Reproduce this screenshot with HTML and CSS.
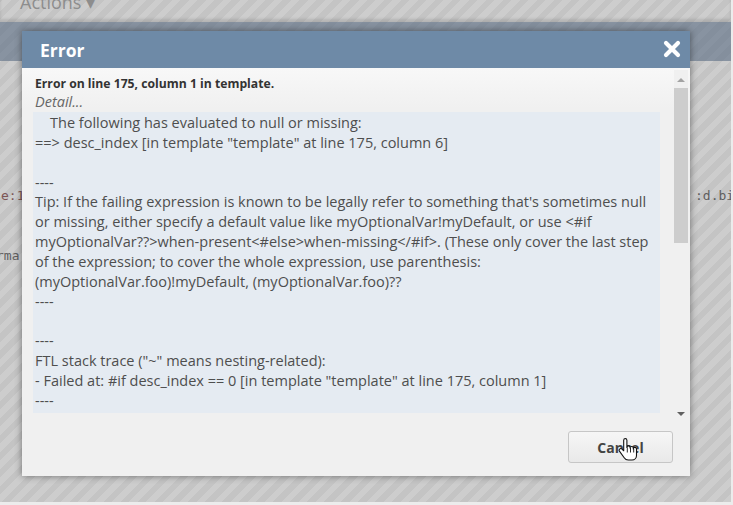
FILE: index.html
```html
<!DOCTYPE html>
<html>
<head>
<meta charset="utf-8">
<link rel="stylesheet" href="styles.css">
</head>
<body>
<div class="page">
  <div class="toolbar"><span class="actions">Actions ▾</span></div>
  <div class="band"></div>
  <div class="bg-code">
    <div class="bg-row row1"><span class="kw">e:1</span><span>:d.bil</span></div>
    <div class="bg-row row2"><span>rma</span></div>
  </div>

  <div class="dialog">
    <div class="dialog-title">
      <span class="title-text">Error</span>
      <svg class="close" width="18" height="18" viewBox="0 0 18 18"><path d="M3 3L15 15M15 3L3 15" stroke="#fff" stroke-width="4.2" stroke-linecap="round"/></svg>
    </div>
    <div class="dialog-body">
      <div class="scroll-content">
        <div class="err-head">Error on line 175, column 1 in template.</div>
        <div class="detail">Detail...</div>
<pre class="trace">    The following has evaluated to null or missing:
==&gt; desc_index [in template "template" at line 175, column 6]

----
Tip: If the failing expression is known to be legally refer to something that's sometimes null
or missing, either specify a default value like myOptionalVar!myDefault, or use &lt;#if
myOptionalVar??&gt;when-present&lt;#else&gt;when-missing&lt;/#if&gt;. (These only cover the last step
of the expression; to cover the whole expression, use parenthesis:
(myOptionalVar.foo)!myDefault, (myOptionalVar.foo)??
----

----
FTL stack trace ("~" means nesting-related):
- Failed at: #if desc_index == 0 [in template "template" at line 175, column 1]
----</pre>
      </div>
      <div class="scrollbar">
        <span class="arrow up"></span>
        <div class="track"><div class="thumb"></div></div>
        <span class="arrow down"></span>
      </div>
    </div>
    <div class="dialog-footer">
      <button class="btn">Cancel</button>
    </div>
  </div>

  <svg class="cursor" width="22" height="27" viewBox="0 0 22 27">
    <path d="M7.5 1.5c-1 0-1.8.8-1.8 1.8v10.5l-1.6-1.7c-.7-.7-1.8-.7-2.5 0-.6.6-.6 1.6 0 2.3l4.6 6.3c.9 1.3 2.3 2.3 4 2.3h3.8c2.6 0 4.5-2.1 4.5-4.6v-6.4c0-.9-.7-1.6-1.6-1.6s-1.6.7-1.6 1.6v-.9c0-.9-.7-1.6-1.6-1.6s-1.6.7-1.6 1.6v-.6c0-.9-.7-1.6-1.6-1.6s-1.6.7-1.6 1.6V3.3c0-1-.8-1.8-1.8-1.8z" fill="#fff" stroke="#111" stroke-width="1.1" stroke-linejoin="round"/>
    <path d="M9.3 10.5v5M12.5 11v4.5M15.7 12v3.5" stroke="#111" stroke-width="0.9"/>
  </svg>
</div>
</body>
</html>
```

FILE: styles.css
```css
html, body {
  margin: 0;
  padding: 0;
}
body {
  background: #ececec;
  width: 733px;
  height: 505px;
  overflow: hidden;
}
.page {
  position: relative;
  width: 731px;
  height: 502px;
  overflow: hidden;
  background: repeating-linear-gradient(-45deg, #cdcdcd 0 6px, #c4c4c4 6px 12px);
}
.toolbar {
  height: 31px;
  padding-left: 20px;
  box-shadow: inset 0 -3px 3px rgba(0,0,0,0.12);
}
.actions {
  display: block;
  margin-top: -9px;
  font-family: "Open Sans", sans-serif;
  font-size: 18px;
  line-height: 22px;
  color: #8d8d8d;
}
.band {
  height: 39px;
  background: rgba(80, 100, 125, 0.55);
}
.bg-code {
  padding-top: 125px;
  font-family: "DejaVu Sans Mono", monospace;
  font-size: 13px;
  color: #5e5e5e;
}
.bg-row {
  display: flex;
  justify-content: space-between;
  height: 20px;
  line-height: 20px;
}
.row1 {
  margin-left: 1px;
}
.row1 span:last-child {
  margin-right: -11px;
}
.row2 {
  margin-top: 40px;
  margin-left: -4px;
}
.kw {
  color: #7d5555;
}

.dialog {
  position: absolute;
  left: 22px;
  top: 31px;
  width: 668px;
  height: 445px;
  display: flex;
  flex-direction: column;
  background: #f0f0f0;
  box-shadow: 0 0 7px rgba(0,0,0,0.45);
  font-family: "Open Sans", sans-serif;
}
.dialog-title {
  height: 37px;
  flex: none;
  display: flex;
  align-items: center;
  justify-content: space-between;
  padding: 0 9px 0 18px;
  background: #6e8aa7;
}
.title-text {
  color: #fff;
  font-weight: 700;
  font-size: 17.5px;
}
.close {
  display: block;
  margin-top: -1px;
}
.dialog-body {
  height: 352px;
  flex: none;
  display: flex;
  padding: 2px 2px 0 11px;
  box-sizing: border-box;
  background: linear-gradient(#f8f8f8, #f0f0f0 40px);
}
.scroll-content {
  width: 627px;
  overflow: hidden;
}
.err-head {
  padding: 5px 0 0 2px;
  font-size: 12.2px;
  font-weight: 700;
  line-height: 17px;
  color: #333;
}
.detail {
  padding-left: 2px;
  font-size: 14.5px;
  font-style: italic;
  line-height: 20px;
  color: #666;
}
.trace {
  margin: 0;
  padding: 1px 2px 2px 2px;
  background: #e5ebf2;
  font-family: "Open Sans", sans-serif;
  font-size: 14.5px;
  line-height: 19.85px;
  color: #4e4e4e;
  white-space: pre;
}
.scrollbar {
  width: 14px;
  margin-left: 14px;
  padding-top: 3px;
  display: flex;
  flex-direction: column;
  align-items: center;
  background: #f0f0f0;
}
.arrow {
  width: 0;
  height: 0;
  border-left: 4px solid transparent;
  border-right: 4px solid transparent;
  margin: 5px 0;
}
.arrow.up {
  border-bottom: 4px solid #a3a3a3;
}
.arrow.down {
  border-top: 4px solid #606060;
  margin-bottom: 4px;
}
.track {
  flex: 1;
  align-self: stretch;
}
.thumb {
  height: 155px;
  margin-top: 1px;
  background: #cdcdcd;
}
.dialog-footer {
  flex: 1;
  display: flex;
  justify-content: flex-end;
  align-items: flex-start;
  padding: 11px 17px 0 0;
}
.btn {
  width: 105px;
  height: 32px;
  border: 1px solid #c6c6c6;
  border-radius: 3px;
  background: linear-gradient(#f6f6f6, #e9e9e9);
  font-family: "Open Sans", sans-serif;
  font-weight: 700;
  font-size: 14px;
  color: #444;
  padding: 0;
}
.cursor {
  position: absolute;
  left: 618px;
  top: 437px;
}
```
